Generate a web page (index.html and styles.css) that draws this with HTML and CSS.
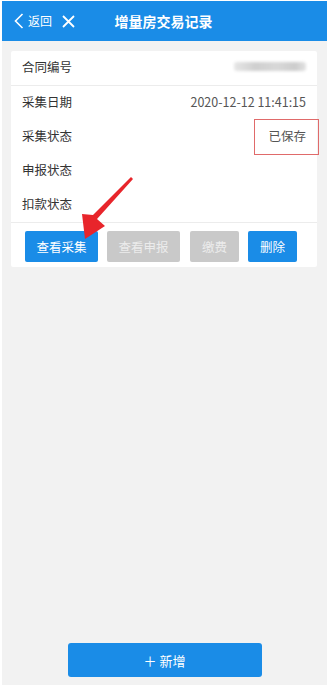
FILE: index.html
```html
<!DOCTYPE html>
<html lang="zh">
<head>
<meta charset="utf-8">
<link rel="stylesheet" href="styles.css">
</head>
<body>
<div class="app">
  <header class="topbar">
    <div class="nav-left">
      <svg class="chev" width="10" height="16" viewBox="0 0 10 16"><path d="M8.5 1 L1.5 8 L8.5 15" fill="none" stroke="#fff" stroke-width="1.6"/></svg>
      <span class="back">返回</span>
      <svg class="close" width="13" height="13" viewBox="0 0 13 13"><path d="M1 1 L12 12 M12 1 L1 12" fill="none" stroke="#fff" stroke-width="1.8"/></svg>
    </div>
    <h1 class="title">增量房交易记录</h1>
  </header>
  <main class="content">
    <section class="card">
      <div class="row row-first">
        <span class="label">合同编号</span>
        <span class="blur"></span>
      </div>
      <div class="rows">
        <div class="row"><span class="label">采集日期</span><span class="value">2020-12-12 11:41:15</span></div>
        <div class="row"><span class="label">采集状态</span><span class="value">已保存</span></div>
        <div class="row"><span class="label">申报状态</span><span class="value"></span></div>
        <div class="row"><span class="label">扣款状态</span><span class="value"></span></div>
      </div>
      <div class="actions">
        <button class="btn btn-blue w73">查看采集</button>
        <button class="btn btn-gray w73">查看申报</button>
        <button class="btn btn-gray w48">缴费</button>
        <button class="btn btn-blue w48">删除</button>
      </div>
    </section>
    <div class="highlight"></div>
    <svg class="arrow" width="60" height="66" viewBox="0 0 60 66">
      <polygon points="52,1 54,3 18,43 26,50 6,63 3,38 14,39" fill="#e8252b"/>
    </svg>
  </main>
  <footer class="bottom">
    <button class="add">＋ 新增</button>
  </footer>
</div>
</body>
</html>
```
FILE: styles.css
```css
* { box-sizing: border-box; }
html, body { margin: 0; padding: 0; background: #fff; }
body { font-family: "Noto Sans CJK SC", "Noto Sans", sans-serif; }
.app {
  margin: 1px 4px 2px 2px;
  height: 684px;
  background: #f2f2f2;
  display: flex;
  flex-direction: column;
  position: relative;
}
.topbar {
  height: 40px;
  background: #1a8ce7;
  display: flex;
  align-items: center;
  position: relative;
  color: #fff;
}
.nav-left {
  display: flex;
  align-items: center;
  padding-left: 12px;
  position: relative;
  z-index: 1;
}
.chev { margin-right: 4px; }
.back { font-size: 12px; line-height: 1; margin-right: 10px; }
.title {
  position: absolute;
  left: 0; right: 0; top: 0;
  margin: 0;
  text-align: center;
  line-height: 40px;
  font-size: 14px;
  font-weight: bold;
  padding-right: 2px;
}
.content {
  flex: 1;
  position: relative;
  padding: 10px 10px 0 9px;
}
.card {
  background: #fff;
  border-radius: 2px;
}
.row {
  display: flex;
  justify-content: space-between;
  align-items: center;
  height: 34px;
  padding: 0 11px 3px 11px;
  font-size: 12.5px;
}
.row-first {
  height: 35px;
  border-bottom: 1px solid #ececec;
}
.label { color: #333; }
.value { color: #555; font-size: 12.5px; }
.blur {
  width: 72px;
  height: 9px;
  background: linear-gradient(90deg, #e6e6e6, #cfcfcf 30%, #d8d8d8 60%, #cccccc 85%, #e2e2e2);
  border-radius: 3px;
  filter: blur(1.5px);
}
.rows {
  border-bottom: 1px solid #ececec;
}
.actions {
  display: flex;
  gap: 9px;
  padding: 8px 14px 5px 14px;
}
.btn {
  height: 31px;
  border: none;
  border-radius: 2px;
  font-family: inherit;
  font-size: 12.5px;
  padding: 0;
  color: #fff;
}
.btn-blue { background: #1a8ce7; }
.btn-gray { background: #c9c9c9; color: #ececec; }
.w73 { width: 73px; }
.w48 { width: 49px; }
.btn-gray.w48 { margin-left: 1px; }
.highlight {
  position: absolute;
  left: 252px;
  top: 78px;
  width: 65px;
  height: 36px;
  border: 1px solid #e06a6a;
}
.arrow {
  position: absolute;
  left: 77px;
  top: 135px;
}
.bottom {
  display: flex;
  justify-content: center;
  padding: 0 0 8px 0;
}
.add {
  width: 194px;
  height: 34px;
  background: #1a8ce7;
  color: #fff;
  border: none;
  border-radius: 3px;
  font-family: inherit;
  font-size: 13px;
}
```
